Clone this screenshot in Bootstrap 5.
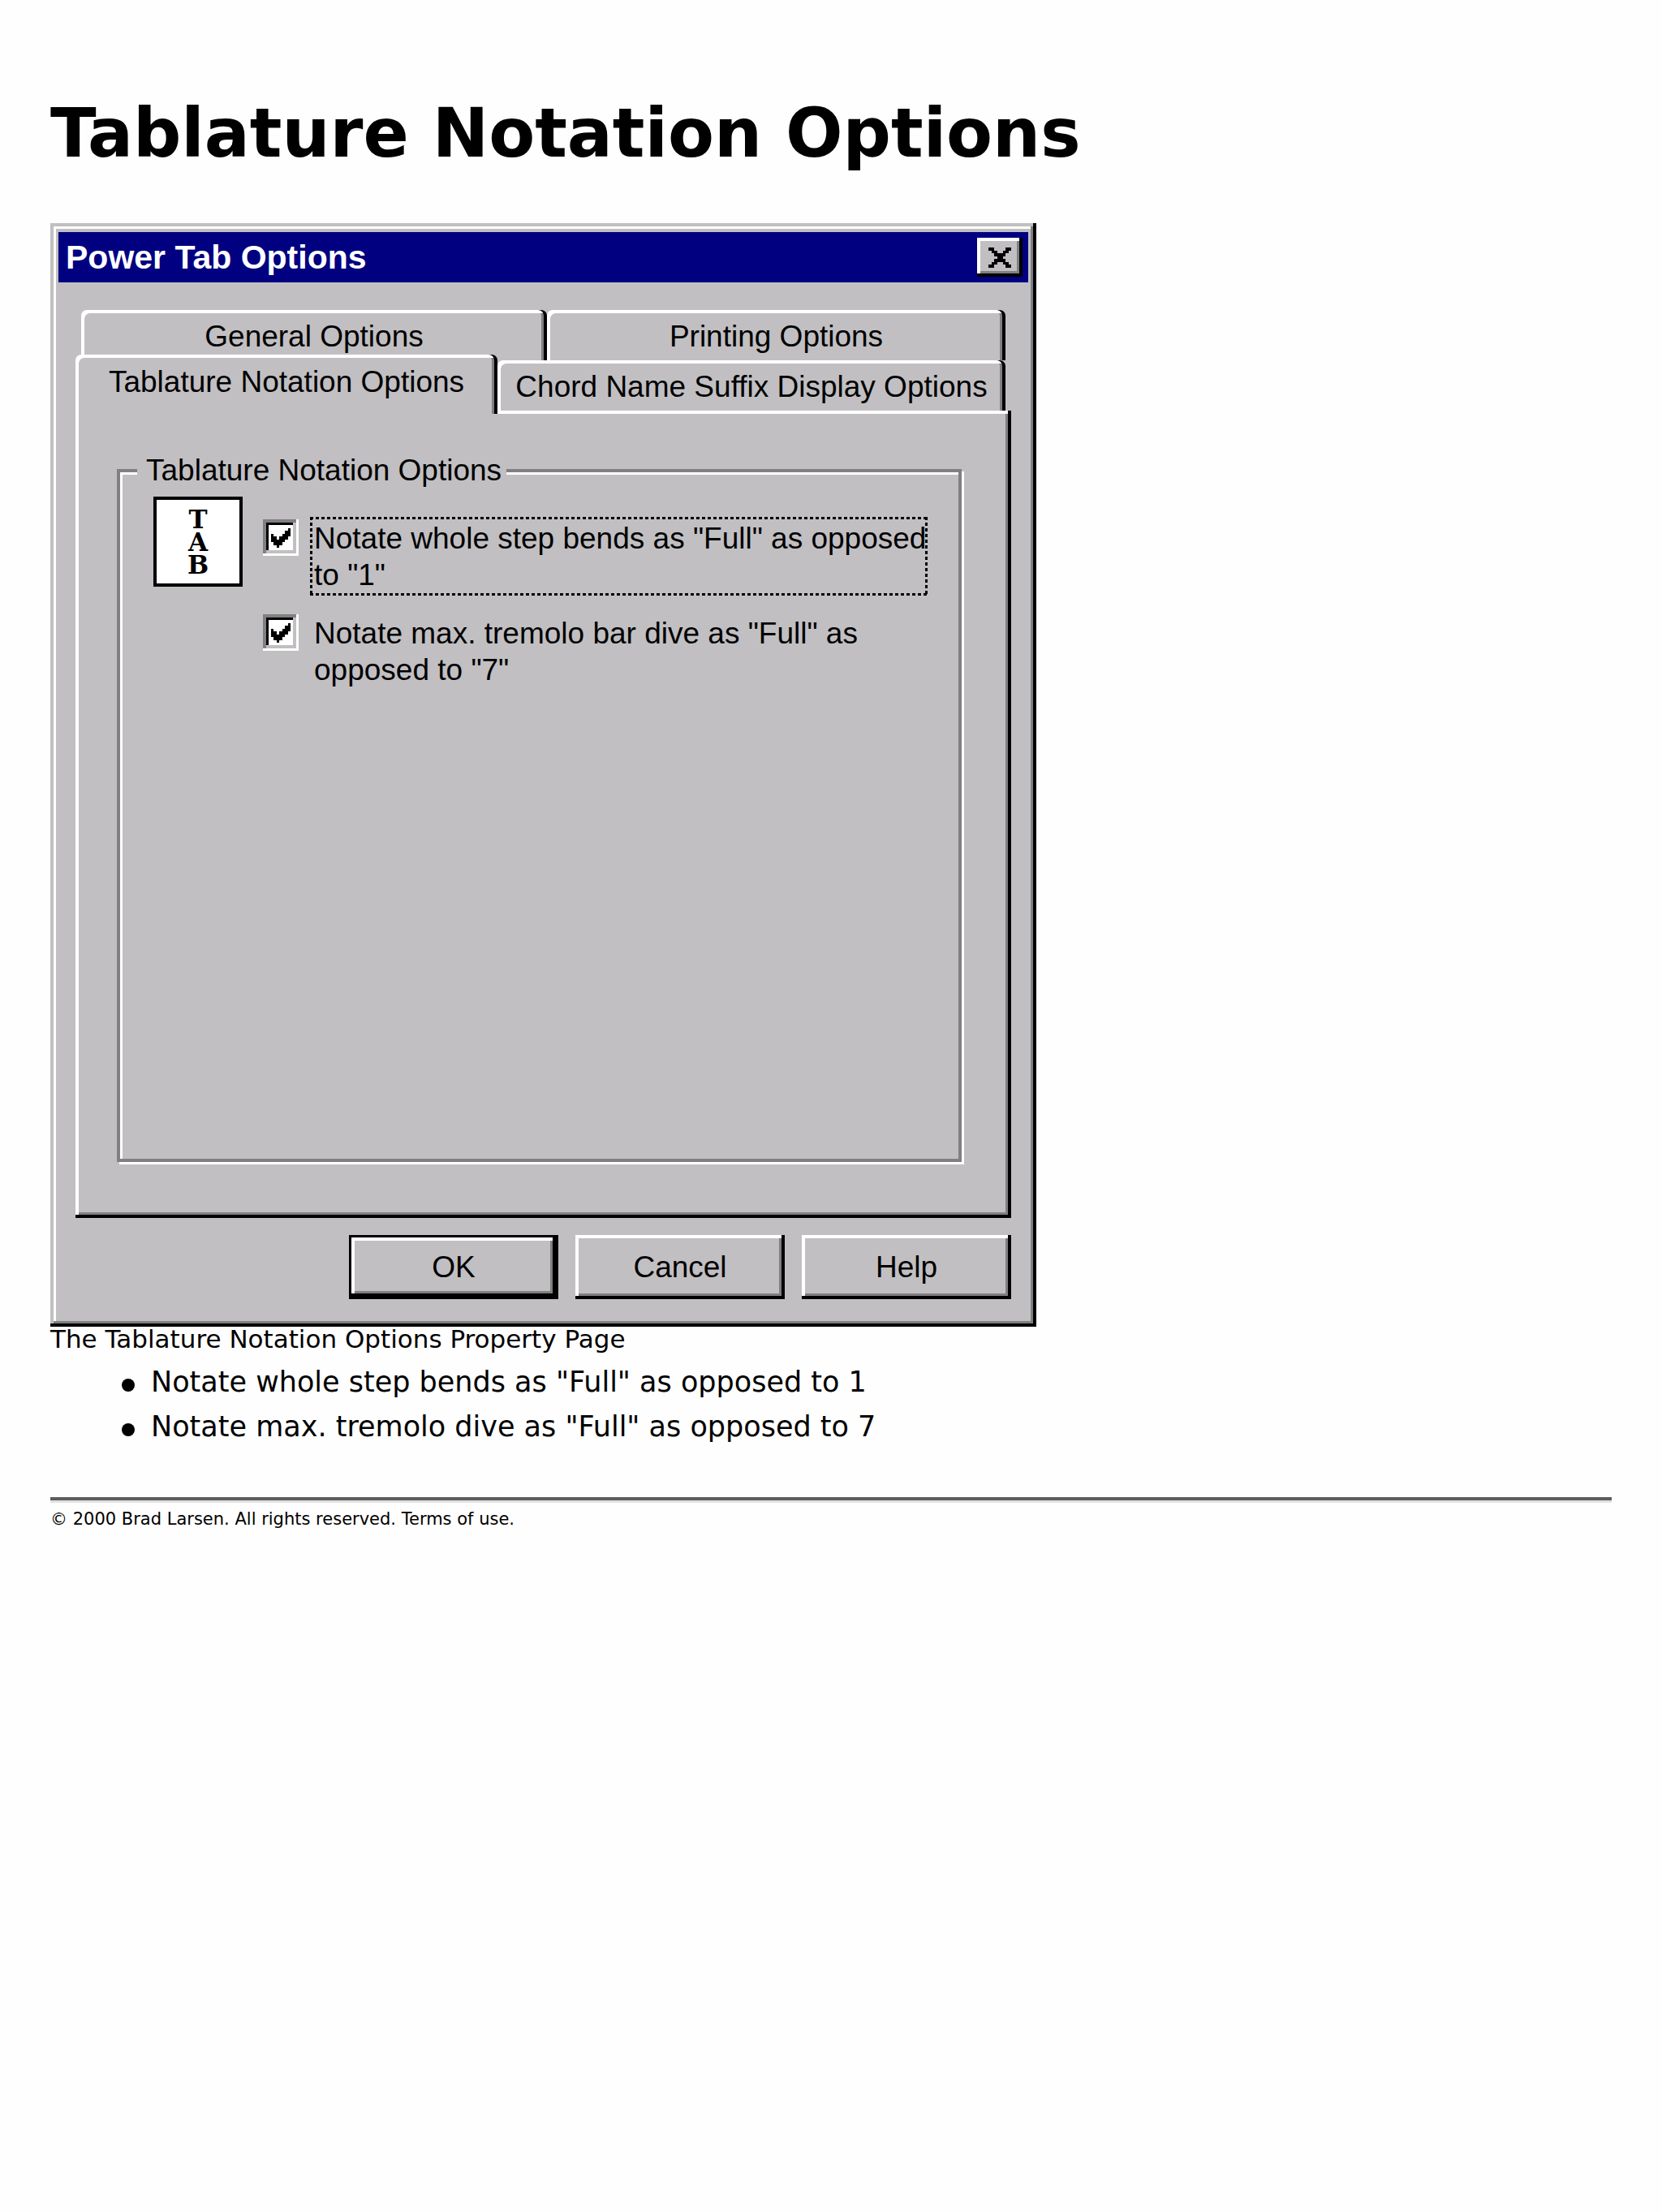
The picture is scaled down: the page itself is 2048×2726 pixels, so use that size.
<!DOCTYPE html>
<html lang="en">
<head>
<meta charset="utf-8">
<meta name="viewport" content="width=device-width, initial-scale=1">
<title>Tablature Notation Options</title>
<link rel="stylesheet" href="https://cdn.jsdelivr.net/npm/bootstrap@5.3.0/dist/css/bootstrap.min.css">
<style>
  :root { --face: #c1bfc2; --shade: #808080; }
  body { background: #fefefe; color: #000; font-family: Verdana, "DejaVu Sans", sans-serif; }
  .page { padding: 116px 62px 60px; }
  .page-title { font-size: 83px; line-height: 98px; font-weight: 700; margin: 0 0 61px; }

  .dialog {
    max-width: 1215px; padding: 11px 10px 34px; background: var(--face);
    box-shadow: inset -4px -4px #000, inset 4px 4px #c0c0c0, inset -7px -7px var(--shade), inset 7px 7px #fff;
    font-family: "Liberation Sans", Arial, sans-serif;
    font-size: 37px; line-height: 45px;
  }
  .dialog button { color: #000; background: var(--face); border: 0; padding: 0; }
  .title-bar { background: #000080; color: #fff; height: 62px; padding: 0 7px 0 9px; }
  .title-text { font-size: 41px; font-weight: 700; }
  .raised { box-shadow: inset -4px -4px #000, inset 4px 4px #fff, inset -7px -7px var(--shade); }
  .close-key { width: 56px; height: 48px; }
  .dialog-body { padding: 34px 21px 0; }

  .tab-row { padding: 0 7px; }
  .dialog .tab-key { height: 62px; padding-top: 3px; border-radius: 7px 7px 0 0; white-space: nowrap; box-shadow: inset -4px 0 #000, inset 4px 4px #fff, inset -7px 0 var(--shade); }
  .w-general { flex: 574 1 0; }
  .w-printing { flex: 565 1 0; }
  .w-tablature { flex: 520 1 0; }
  .w-chord { flex: 626 1 0; }
  .dialog .tab-current { position: relative; z-index: 1; height: 73px; margin: -7px 0 -4px -7px; padding: 0 0 6px; }
  .tab-panel { padding: 51px 61px 69px 51px; }

  .group { min-height: 875px; border: 4px solid var(--shade); box-shadow: 3px 3px #fff, inset 3px 3px #fff; padding: 10px 38px 0 41px; }
  .group legend { float: none; width: auto; margin: 0 0 0 -20px; padding: 0 6px 0 11px; background: var(--face); font-size: 37px; line-height: 45px; }
  .tab-icon { width: 110px; height: 111px; border: 4px solid #000; background: #fff; font: 700 31px/28px "DejaVu Serif", serif; }
  .checks { padding: 25px 0 0 25px; gap: 20px; }
  .tick { appearance: none; flex: none; width: 44px; height: 45px; margin: 3px 14px 0 0; background: #fff;
    box-shadow: inset -3px -3px #fff, inset 4px 4px var(--shade), inset -7px -7px #c0c0c0, inset 7px 7px #000; }
  .tick:checked { background: #fff url("data:image/svg+xml,%3Csvg xmlns='http://www.w3.org/2000/svg' viewBox='0 0 7 7' shape-rendering='crispEdges'%3E%3Cpath d='M0 2h1v1h1v1h1v-1h1v-1h1v-1h1v-1h1v3h-1v1h-1v1h-1v1h-1v1h-1v-1h-1v-1h-1z'/%3E%3C/svg%3E") 10px 11px / 24px 24px no-repeat; }
  .tick-label { flex: 0 1 761px; height: 97px; padding: 4px 0 0 5px; white-space: nowrap; }
  .focused {
    background:
      repeating-linear-gradient(90deg, #000 0 4px, transparent 4px 7px) 0 0 / 100% 3px no-repeat,
      repeating-linear-gradient(90deg, #000 0 4px, transparent 4px 7px) 0 100% / 100% 3px no-repeat,
      repeating-linear-gradient(#000 0 4px, transparent 4px 7px) 0 0 / 3px 100% no-repeat,
      repeating-linear-gradient(#000 0 4px, transparent 4px 7px) 100% 0 / 3px 100% no-repeat;
  }
  .actions { gap: 21px; padding-top: 21px; }
  .action-key { width: 258px; height: 79px; }
  .default-key { box-shadow: inset 0 0 0 3px #000, inset -7px -7px #000, inset 7px 7px #fff, inset -10px -10px var(--shade); }

  .caption-line { font-size: 31px; line-height: 30px; margin: 0 0 11px; }
  .notes { padding-left: 88px; margin: 0 0 59px; font-size: 35px; line-height: 55px; }
  .notes li { gap: 20px; }
  .notes li::before { content: ""; width: 16px; height: 16px; margin-top: 7px; border-radius: 50%; background: #000; }
  .rule { margin: 0 0 5px; opacity: 1; border: 0; border-top: 4px solid #5f5c60; height: 7px; background: #e2e0e3; }
  .legal { font-size: 21px; line-height: 30px; margin: 0; }
</style>
</head>
<body>
<main class="page">
  <h1 class="page-title">Tablature Notation Options</h1>

  <section class="dialog" aria-label="Power Tab Options">
    <div class="title-bar d-flex align-items-center justify-content-between">
      <span class="title-text">Power Tab Options</span>
      <button type="button" class="close-key raised d-flex align-items-center justify-content-center" aria-label="Close">
        <svg width="28" height="25" viewBox="0 0 8 7" preserveAspectRatio="none" shape-rendering="crispEdges" aria-hidden="true"><path d="M0 0h2v1h1v1h2v-1h1v-1h2v1h-1v1h-1v1h-1v1h1v1h1v1h1v1h-2v-1h-1v-1h-2v1h-1v1h-2v-1h1v-1h1v-1h1v-1h-1v-1h-1v-1h-1z"/></svg>
      </button>
    </div>

    <div class="dialog-body">
      <div role="tablist">
        <div class="tab-row d-flex">
          <button type="button" role="tab" class="tab-key w-general">General Options</button>
          <button type="button" role="tab" class="tab-key w-printing">Printing Options</button>
        </div>
        <div class="tab-row d-flex">
          <button type="button" role="tab" aria-selected="true" class="tab-key tab-current w-tablature">Tablature Notation Options</button>
          <button type="button" role="tab" class="tab-key w-chord">Chord Name Suffix Display Options</button>
        </div>
      </div>

      <div class="tab-panel raised" role="tabpanel">
        <fieldset class="group">
          <legend>Tablature Notation Options</legend>
          <div class="d-flex align-items-start">
            <div class="tab-icon d-flex flex-column align-items-center justify-content-center flex-shrink-0"><span>T</span><span>A</span><span>B</span></div>
            <div class="checks d-flex flex-column flex-grow-1">
              <div class="d-flex align-items-start">
                <input type="checkbox" class="tick" id="bends" checked>
                <label class="tick-label focused" for="bends">Notate whole step bends as "Full" as opposed<br>to "1"</label>
              </div>
              <div class="d-flex align-items-start">
                <input type="checkbox" class="tick" id="dive" checked>
                <label class="tick-label" for="dive">Notate max. tremolo bar dive as "Full" as<br>opposed to "7"</label>
              </div>
            </div>
          </div>
        </fieldset>
      </div>

      <div class="actions d-flex justify-content-end">
        <button type="button" class="action-key default-key">OK</button>
        <button type="button" class="action-key raised">Cancel</button>
        <button type="button" class="action-key raised">Help</button>
      </div>
    </div>
  </section>

  <p class="caption-line">The Tablature Notation Options Property Page</p>
  <ul class="notes list-unstyled">
    <li class="d-flex align-items-center">Notate whole step bends as "Full" as opposed to 1</li>
    <li class="d-flex align-items-center">Notate max. tremolo dive as "Full" as opposed to 7</li>
  </ul>
  <hr class="rule">
  <p class="legal">© 2000 Brad Larsen. All rights reserved. Terms of use.</p>
</main>
<script src="https://cdn.jsdelivr.net/npm/bootstrap@5.3.0/dist/js/bootstrap.bundle.min.js"></script>
</body>
</html>
